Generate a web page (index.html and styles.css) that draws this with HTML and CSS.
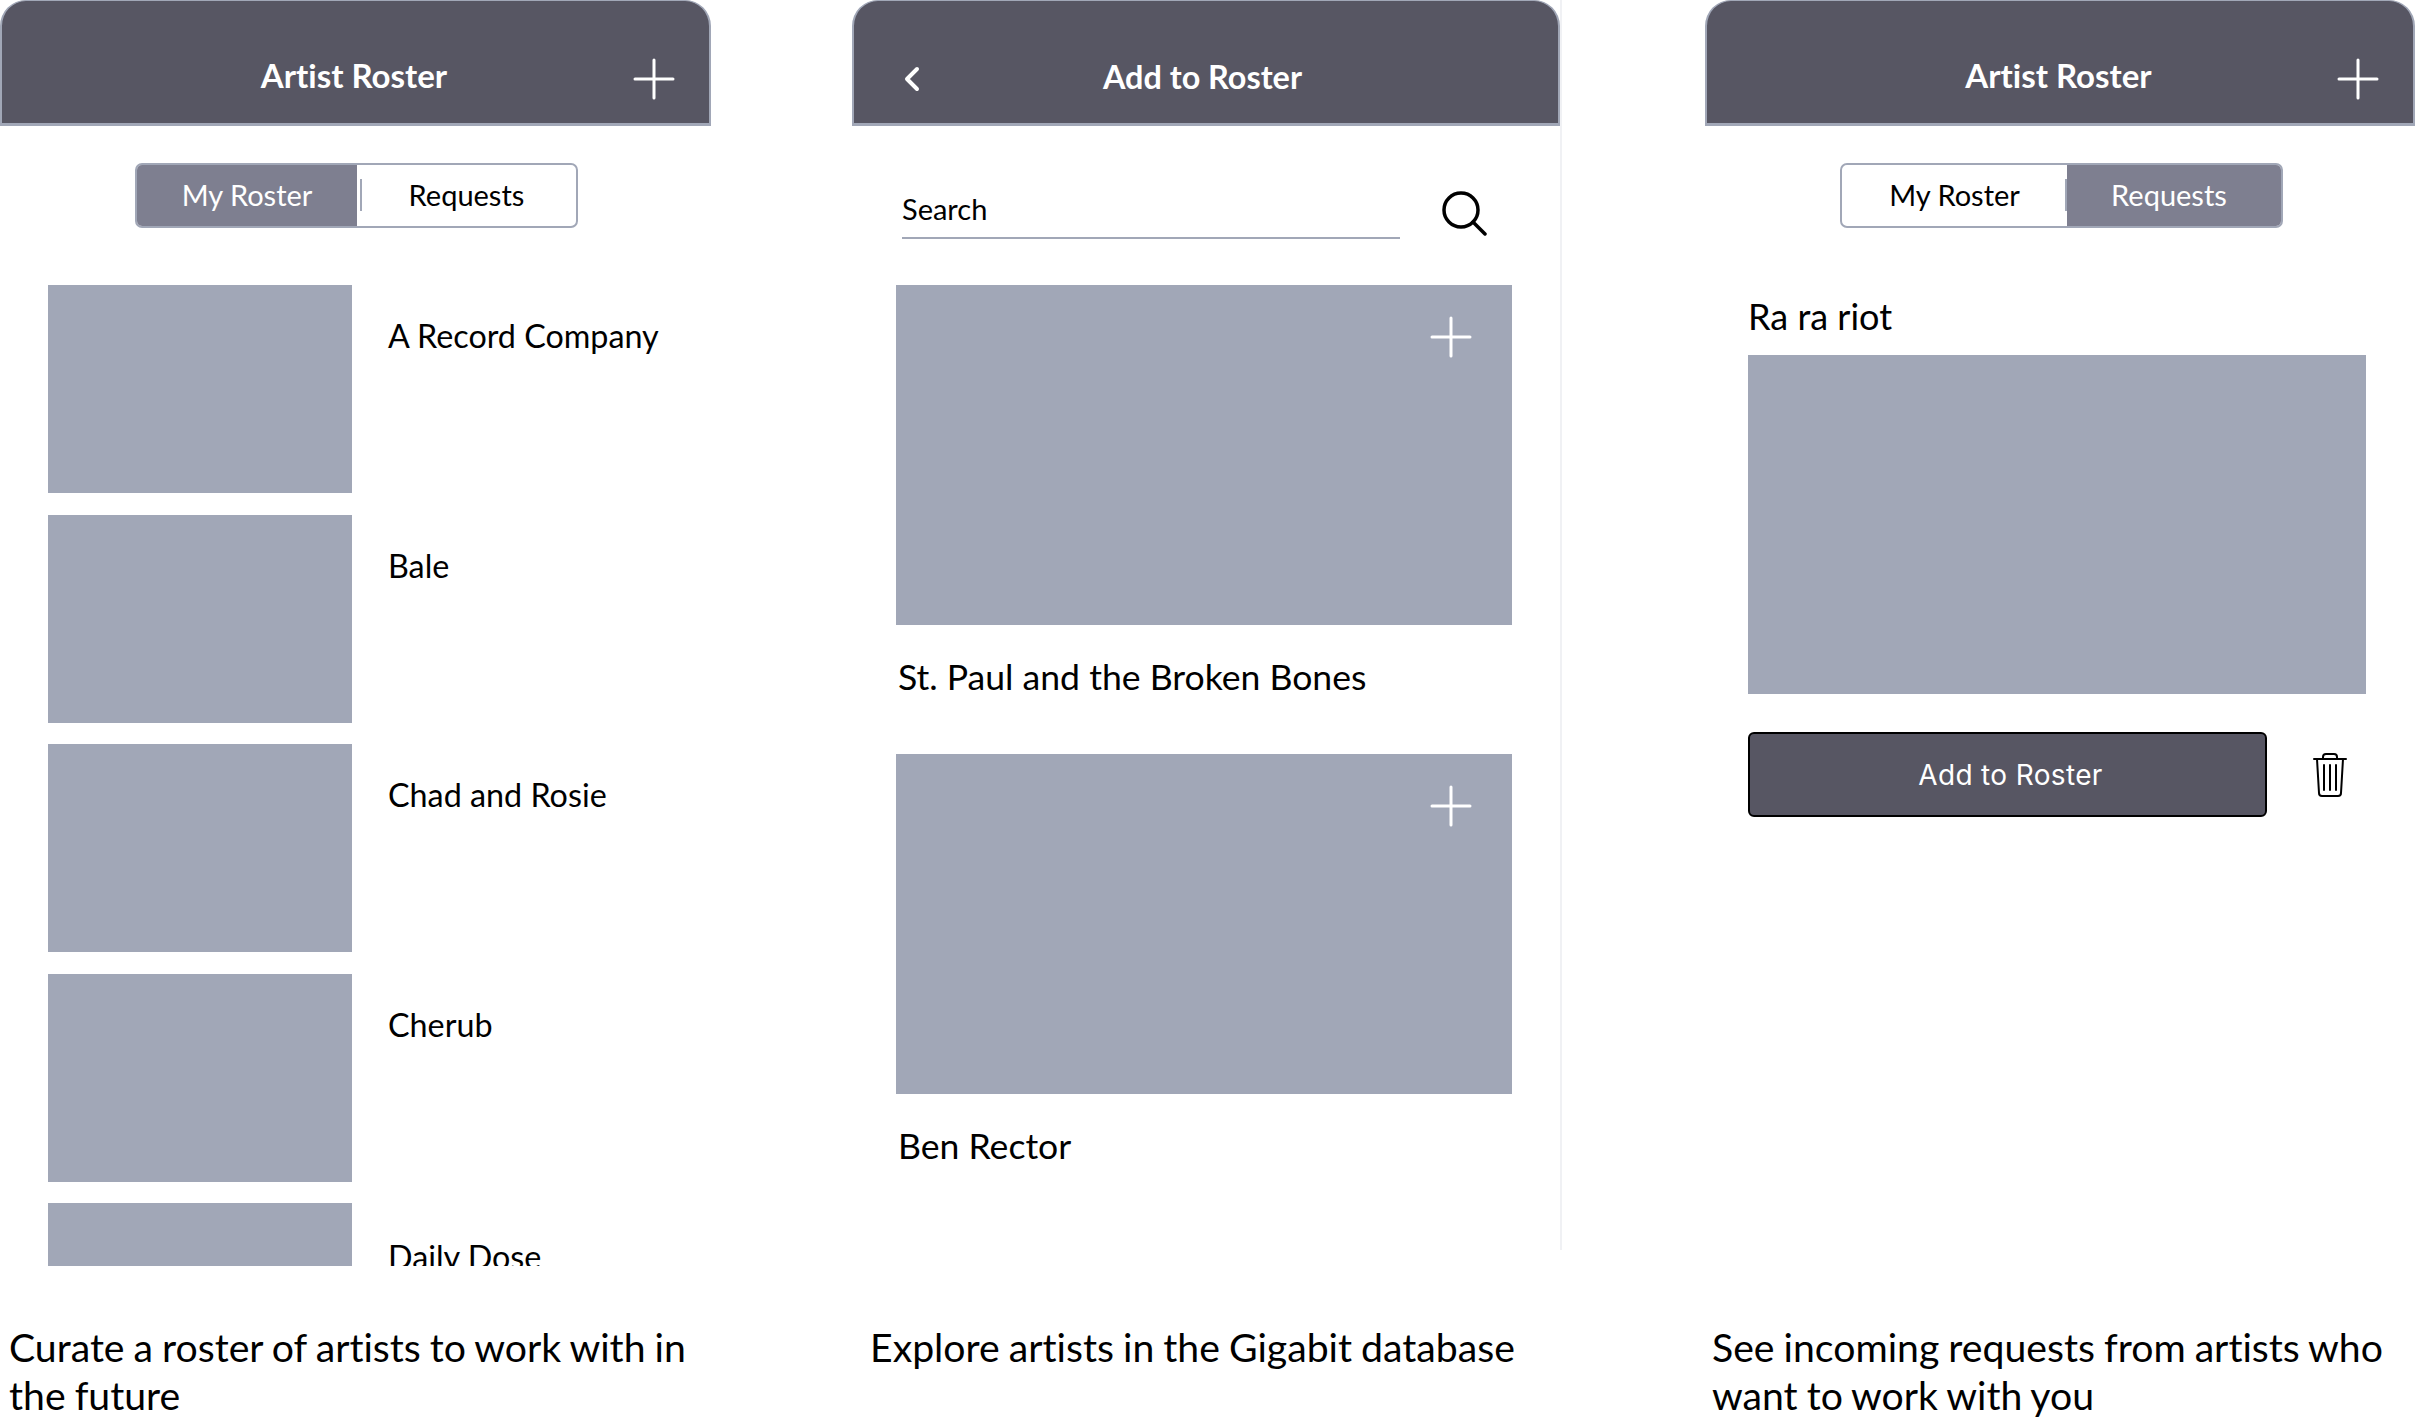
FILE: index.html
```html
<!DOCTYPE html>
<html lang="en">
<head>
  <meta charset="UTF-8" />
  <title>Artist Roster</title>
  <link rel="stylesheet" href="styles.css">
</head>
<body>
  <div class="screens">

    <!-- My Roster -->
    <section class="col col-one">
      <div class="phone">
        <header class="topbar">
          <span class="spacer"></span>
          <h1 class="title">Artist Roster</h1>
          <svg class="top-plus" viewBox="0 0 42 42"><path d="M21 2V40M2 21H40"/></svg>
        </header>
        <div class="tabs">
          <div class="tab tab-on tab-left">My Roster</div>
          <div class="tab tab-mark">Requests</div>
        </div>
        <div class="list">
          <div class="row"><div class="thumb"></div><div class="row-name">A Record Company</div></div>
          <div class="row"><div class="thumb"></div><div class="row-name">Bale</div></div>
          <div class="row"><div class="thumb"></div><div class="row-name">Chad and Rosie</div></div>
          <div class="row"><div class="thumb"></div><div class="row-name">Cherub</div></div>
          <div class="row"><div class="thumb"></div><div class="row-name row-name-last">Daily Dose</div></div>
        </div>
      </div>
      <p class="caption">Curate a roster of artists to work with in the future</p>
    </section>

    <!-- Add to Roster -->
    <section class="col col-two">
      <div class="phone phone-edge">
        <header class="topbar">
          <svg class="back" viewBox="0 0 16 26"><path d="M13 3L3 13L13 23"/></svg>
          <h1 class="title title-add">Add to Roster</h1>
        </header>
        <div class="search">
          <div class="search-box">Search</div>
          <svg class="search-icon" viewBox="0 0 46 46"><circle cx="20" cy="20" r="17"/><path d="M32 32L44 44"/></svg>
        </div>
        <div class="card">
          <svg class="card-plus" viewBox="0 0 42 42"><path d="M21 2V40M2 21H40"/></svg>
        </div>
        <div class="card-name">St. Paul and the Broken Bones</div>
        <div class="card">
          <svg class="card-plus" viewBox="0 0 42 42"><path d="M21 2V40M2 21H40"/></svg>
        </div>
        <div class="card-name">Ben Rector</div>
      </div>
      <p class="caption caption-two">Explore artists in the Gigabit database</p>
    </section>

    <!-- Requests -->
    <section class="col col-three">
      <div class="phone">
        <header class="topbar">
          <span class="spacer"></span>
          <h1 class="title">Artist Roster</h1>
          <svg class="top-plus" viewBox="0 0 42 42"><path d="M21 2V40M2 21H40"/></svg>
        </header>
        <div class="tabs">
          <div class="tab tab-first">My Roster</div>
          <div class="tab tab-on tab-right">Requests</div>
        </div>
        <div class="request">
          <div class="request-name">Ra ra riot</div>
          <div class="request-image"></div>
          <div class="request-actions">
            <div class="add-btn">Add to Roster</div>
            <svg class="trash" viewBox="0 0 36 46">
              <path d="M2 7H34"/>
              <path d="M11 7V5Q11 2 14 2H22Q25 2 25 5V7"/>
              <path d="M5 7L7 41Q7 44 10 44H26Q29 44 29 41L31 7"/>
              <path d="M12 13V38M18 13V38M24 13V38"/>
            </svg>
          </div>
        </div>
      </div>
      <p class="caption">See incoming requests from artists who want to work with you</p>
    </section>

  </div>
</body>
</html>
```

FILE: styles.css
```css
body {
  margin: 0;
  background: #fff;
  color: #000;
  font-family: Lato, "Open Sans", sans-serif;
  font-variant-ligatures: none;
}

.screens {
  display: grid;
  grid-template-columns: 711px 712px 710px;
  column-gap: 141px;
  width: 2415px;
  height: 1419px;
  overflow: hidden;
}

.phone {
  height: 1266px;
  overflow: hidden;
}

.phone-edge {
  width: 710px;
  height: 1250px;
  border-right: 2px solid #f0f1f4;
  box-sizing: border-box;
}

/* top bar */
.topbar {
  display: flex;
  align-items: center;
  justify-content: space-between;
  box-sizing: border-box;
  height: 126px;
  padding: 26px 34px 0 0;
  background: #575663;
  border: 2px solid #a1a7b7;
  border-bottom-width: 3px;
  border-top-width: 1px;
  border-radius: 26px 26px 0 0;
}

.spacer {
  width: 42px;
}

.title {
  margin: 0 0 0 31px;
  font-size: 33px;
  font-weight: 700;
  color: #fff;
}

.title-add {
  margin: 2px 222px 0 0;
  font-size: 32.4px;
}

.top-plus {
  width: 42px;
  height: 42px;
  margin-top: 8px;
}

.top-plus path, .card-plus path {
  fill: none;
  stroke: #fff;
  stroke-width: 3;
  stroke-linecap: round;
}

.back {
  width: 16px;
  height: 26px;
  margin: 8px 0 0 50px;
}

.back path {
  fill: none;
  stroke: #fff;
  stroke-width: 4;
  stroke-linecap: round;
  stroke-linejoin: round;
}

/* segmented tabs */
.tabs {
  display: flex;
  box-sizing: border-box;
  width: 443px;
  height: 65px;
  margin: 37px 0 0 135px;
  border: 2px solid #a1a7b7;
  border-radius: 7px;
  overflow: hidden;
}

.tab {
  display: flex;
  flex: 1;
  position: relative;
  align-items: center;
  justify-content: center;
  padding-bottom: 2px;
  font-size: 29px;
}

.tab-on {
  background: #7e7f90;
  color: #fff;
}

.tab-left {
  flex: 0 0 220px;
}

.tab-mark::before {
  content: "";
  position: absolute;
  left: 3px;
  top: 14px;
  width: 2px;
  height: 32px;
  background: #a1a7b7;
}

.tab-first {
  flex: 0 0 225px;
}

.tab-first::after {
  content: "";
  position: absolute;
  right: 0;
  top: 14px;
  width: 2px;
  height: 32px;
  background: #a1a7b7;
}

.tab-right {
  padding-right: 10px;
}

/* roster list */
.list {
  display: flex;
  flex-direction: column;
  gap: 21.5px;
  margin: 57px 0 0 48px;
}

.row {
  display: flex;
  flex: none;
  gap: 36px;
  height: 208px;
}

.thumb {
  width: 304px;
  height: 208px;
  background: #a1a7b7;
}

.row-name {
  padding-top: 30px;
  font-size: 32.3px;
  line-height: 42px;
}

.row-name-last {
  padding-top: 33px;
}

/* search screen */
.search {
  display: flex;
  align-items: flex-end;
  height: 113px;
  margin: 0 0 46px 50px;
}

.search-box {
  box-sizing: border-box;
  width: 498px;
  height: 46px;
  border-bottom: 2px solid #a1a7b7;
  font-size: 29px;
  line-height: 32px;
}

.search-icon {
  width: 46px;
  height: 46px;
  margin: 0 0 3px 41px;
}

.search-icon circle, .search-icon path {
  fill: none;
  stroke: #000;
  stroke-width: 3.5;
  stroke-linecap: round;
}

.card {
  display: flex;
  justify-content: flex-end;
  box-sizing: border-box;
  width: 616px;
  height: 340px;
  margin-left: 44px;
  padding: 31px 40px 0 0;
  background: #a1a7b7;
}

.card-plus {
  width: 42px;
  height: 42px;
}

.card-name {
  height: 129px;
  margin-left: 46px;
  padding-top: 28px;
  box-sizing: border-box;
  font-size: 35.6px;
  line-height: 48px;
}

/* request screen */
.request {
  margin: 64px 0 0 43px;
}

.request-name {
  height: 63px;
  font-size: 36px;
  line-height: 48px;
}

.request-image {
  width: 618px;
  height: 339px;
  background: #a1a7b7;
}

.request-actions {
  display: flex;
  align-items: center;
  margin-top: 38px;
}

.add-btn {
  display: flex;
  align-items: center;
  justify-content: center;
  box-sizing: border-box;
  width: 519px;
  height: 85px;
  padding-left: 6px;
  background: #575663;
  border: 2px solid #000;
  border-radius: 6px;
  font-family: Inter, sans-serif;
  font-size: 28px;
  letter-spacing: 0.35px;
  color: #fff;
}

.trash {
  width: 36px;
  height: 46px;
  margin-left: 45px;
}

.trash path {
  fill: none;
  stroke: #000;
  stroke-width: 2;
  stroke-linecap: round;
}

/* captions */
.caption {
  margin: 57px 0 0 9px;
  font-size: 39.2px;
  word-spacing: -1px;
  line-height: 48px;
}

.caption-two {
  margin: 73px 0 0 18px;
}

.col-three .caption {
  margin-left: 7px;
}
```
